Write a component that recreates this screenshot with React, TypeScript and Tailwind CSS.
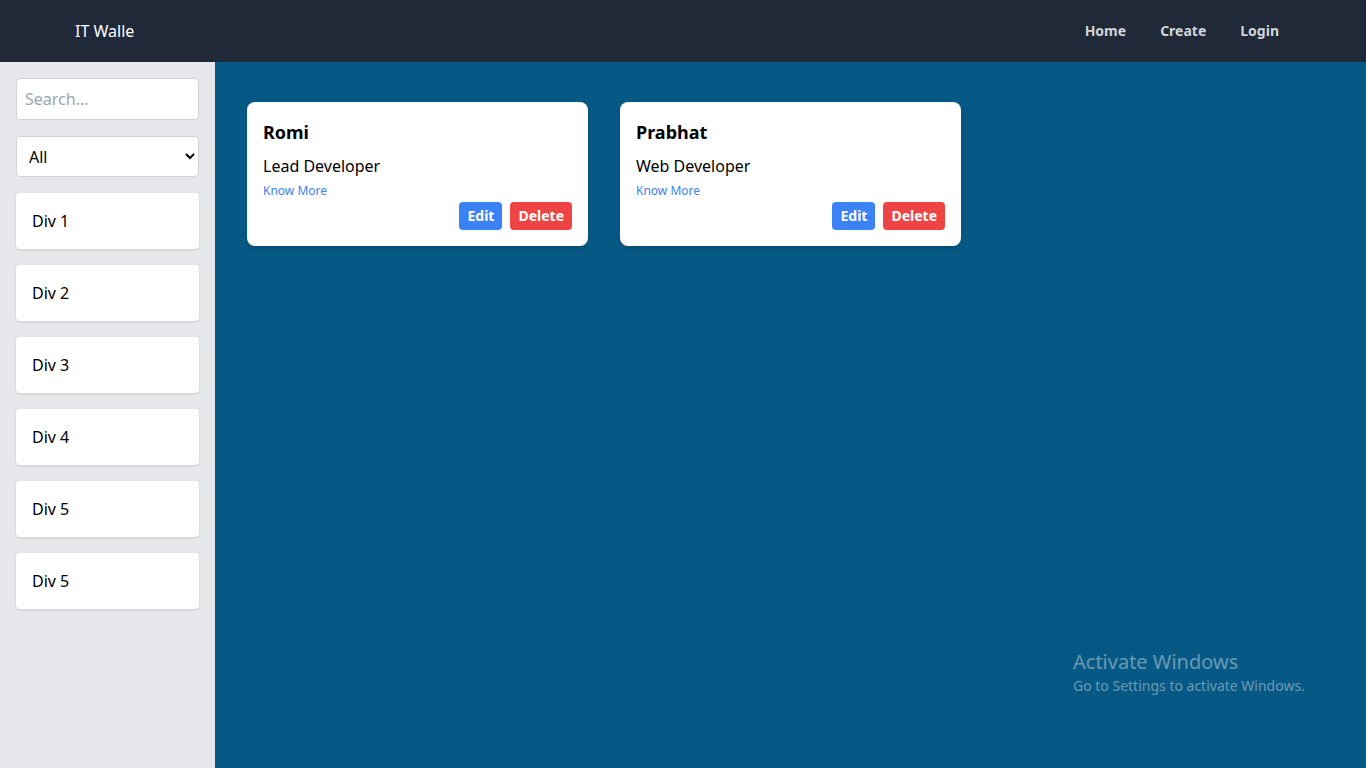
import { useState } from 'react';

export default function App() {
  const [query, setQuery] = useState('');

  const items = ['Div 1', 'Div 2', 'Div 3', 'Div 4', 'Div 5', 'Div 5'];

  const people = [
    { name: 'Romi', role: 'Lead Developer' },
    { name: 'Prabhat', role: 'Web Developer' },
  ];

  return (
    <div className="min-h-screen flex flex-col font-['Noto_Sans','Open_Sans',sans-serif] text-black">
      {/* Navbar */}
      <nav className="h-[62px] bg-[#1f2937] flex items-center justify-between pl-[75px] pr-[87px] shrink-0">
        <div className="text-white text-base">IT Walle</div>
        <div className="flex items-center gap-[34px] text-sm font-bold text-[#d1d5db]">
          <a href="#">Home</a>
          <a href="#">Create</a>
          <a href="#">Login</a>
        </div>
      </nav>

      <div className="flex flex-1 h-[706px]">
        {/* Sidebar */}
        <aside className="w-[215px] bg-[#e5e7eb] p-4 flex flex-col gap-4 shrink-0">
          <input
            type="text"
            placeholder="Search..."
            value={query}
            onChange={(e) => setQuery(e.target.value)}
            className="h-[42px] w-full bg-white border border-[#d1d5db] rounded px-2 text-base placeholder:text-[#9ca3af] focus:outline-none"
          />
          <select className="h-[41px] w-full bg-white border border-[#d1d5db] rounded px-2 text-base">
            <option>All</option>
          </select>
          {items.map((item, i) => (
            <div key={i} className="bg-white rounded shadow p-4 text-base">
              {item}
            </div>
          ))}
        </aside>

        {/* Main content */}
        <main className="relative flex-1 bg-[#075985] px-8 pt-10">
          <div className="grid grid-cols-3 gap-8 items-start">
            {people.map((p, i) => (
              <div key={i} className="bg-white rounded-lg shadow-md p-4">
                <h2 className="text-lg font-bold mb-2">{p.name}</h2>
                <p className="text-base">{p.role}</p>
                <a href="#" className="block mt-[5px] text-xs text-[#3b82f6]">Know More</a>
                <div className="flex justify-end gap-2 mt-[3px]">
                  <button className="bg-[#3b82f6] text-white text-sm font-bold px-2 py-1 rounded">Edit</button>
                  <button className="bg-[#ef4444] text-white text-sm font-bold px-2 py-1 rounded">Delete</button>
                </div>
              </div>
            ))}
          </div>

          {/* OS watermark */}
          <div className="absolute left-[858px] top-[586px] text-white/40 pointer-events-none">
            <div className="text-xl leading-7">Activate Windows</div>
            <div className="text-sm">Go to Settings to activate Windows.</div>
          </div>
        </main>
      </div>
    </div>
  );
}
